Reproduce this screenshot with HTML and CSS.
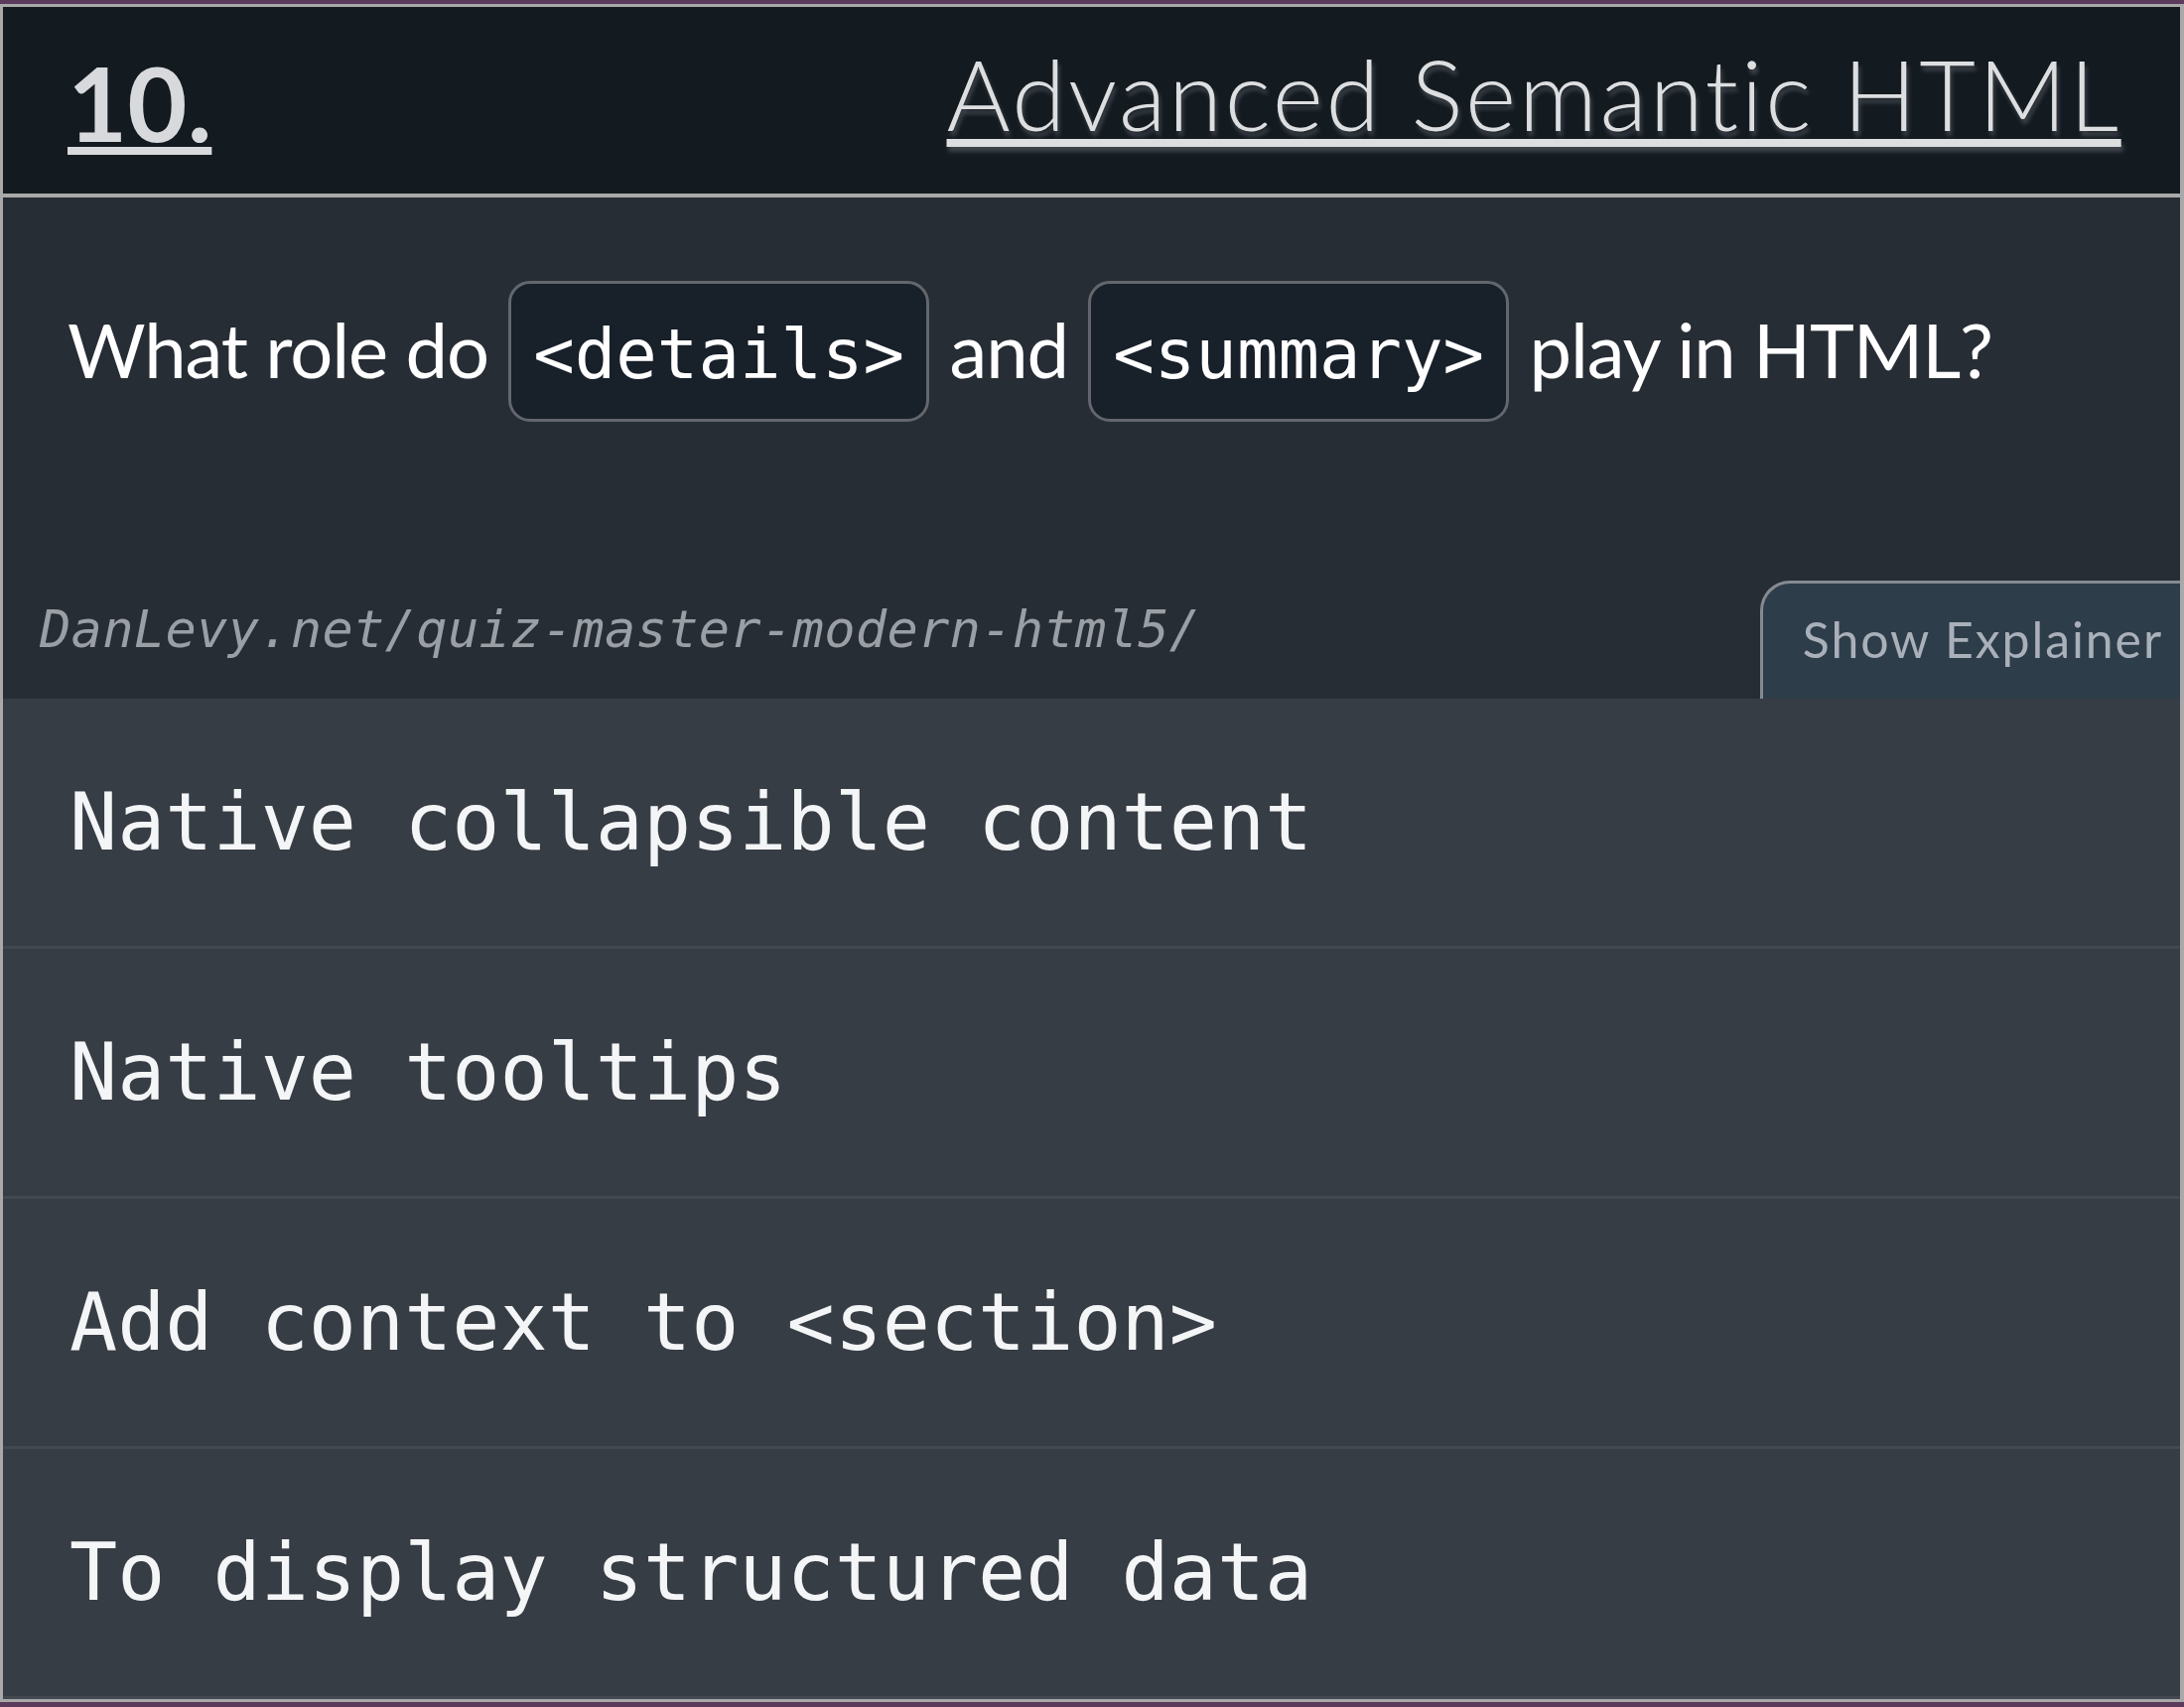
FILE: index.html
```html
<!DOCTYPE html>
<html lang="en">
<head>
<meta charset="utf-8">
<title>Quiz 10 - Advanced Semantic HTML</title>
<link rel="stylesheet" href="styles.css">
</head>
<body>
<main class="card">
  <header class="card-head">
    <a class="q-num" href="#">10.</a>
    <a class="q-title" href="#">Advanced Semantic HTML</a>
  </header>
  <section class="question">
    <p class="q-text">What role do <code class="chip">&lt;details&gt;</code> and <code class="chip">&lt;summary&gt;</code> play in HTML?</p>
    <div class="q-foot">
      <span class="q-url">DanLevy.net/quiz-master-modern-html5/</span>
      <button class="explainer">Show Explainer</button>
    </div>
  </section>
  <ul class="options">
    <li class="option">Native collapsible content</li>
    <li class="option">Native tooltips</li>
    <li class="option">Add context to &lt;section&gt;</li>
    <li class="option">To display structured data</li>
  </ul>
</main>
</body>
</html>
```

FILE: styles.css
```css
html, body {
  margin: 0;
  padding: 0;
}
body {
  background: #5b3a5c;
  padding: 4px 0 5px;
  font-family: "Lato", "Open Sans", sans-serif;
}
.card {
  box-sizing: border-box;
  width: 2200px;
  height: 1711px;
  border: 3px solid #a9a9a9;
  border-right-width: 4px;
  background: #373d45;
  display: flex;
  flex-direction: column;
  overflow: hidden;
}
.card-head {
  box-sizing: border-box;
  height: 192px;
  flex: none;
  background: #131a20;
  border-bottom: 4px solid #a9a9a9;
  display: flex;
  justify-content: space-between;
  align-items: flex-start;
  padding: 0 62px 0 65px;
}
.q-num {
  margin-top: 33px;
  font-size: 104px;
  font-weight: 700;
  line-height: 125px;
  color: #d7d9dc;
  text-decoration: underline;
  text-decoration-thickness: 8px;
  text-underline-offset: 5px;
}
.q-title {
  margin-top: 28px;
  margin-right: -2.7px;
  font-size: 98px;
  font-weight: 300;
  letter-spacing: 2.7px;
  line-height: 118px;
  color: #dcdee0;
  text-decoration: underline;
  text-decoration-thickness: 8px;
  text-underline-offset: 8px;
  text-shadow: 2px 5px 4px rgba(120, 122, 130, 0.45);
}
.question {
  box-sizing: border-box;
  height: 505px;
  flex: none;
  background: #272d34;
  display: flex;
  flex-direction: column;
}
.q-text {
  margin: 0;
  padding: 84px 65px 0;
  font-size: 76px;
  font-weight: 400;
  letter-spacing: -1.1px;
  color: #ffffff;
  white-space: nowrap;
}
.chip {
  display: inline-block;
  margin: 0 2px;
  padding: 36px 22px 30px;
  border: 3px solid #63676d;
  border-radius: 22px;
  background: #18202a;
  font-family: "DejaVu Sans Mono", "Liberation Mono", monospace;
  font-size: 69px;
  letter-spacing: 0;
  line-height: 70px;
  color: #ffffff;
}
.q-foot {
  margin-top: auto;
  height: 119px;
  display: flex;
  justify-content: space-between;
  align-items: flex-start;
}
.q-url {
  padding: 19px 0 0 37px;
  font-family: "DejaVu Sans Mono", "Liberation Mono", monospace;
  font-style: italic;
  font-size: 52px;
  letter-spacing: 0.3px;
  line-height: 61px;
  color: #9a9fa6;
}
.explainer {
  box-sizing: border-box;
  height: 119px;
  margin: 0;
  padding: 26px 17px 30px 40px;
  border: 3px solid #868b92;
  border-right: 0;
  border-bottom: 0;
  border-top-left-radius: 30px;
  background: #2e3d4a;
  font-family: "Lato", "Open Sans", sans-serif;
  font-size: 50px;
  letter-spacing: 1.9px;
  line-height: 60px;
  color: #a9b0b9;
  cursor: pointer;
}
.options {
  list-style: none;
  margin: 0;
  padding: 0;
}
.option {
  box-sizing: border-box;
  height: 252px;
  padding: 0 67px;
  border-bottom: 3px solid #424950;
  display: flex;
  align-items: center;
  font-family: "DejaVu Sans Mono", "Liberation Mono", monospace;
  font-size: 80px;
  color: #f4f5f6;
  white-space: pre;
}
```
